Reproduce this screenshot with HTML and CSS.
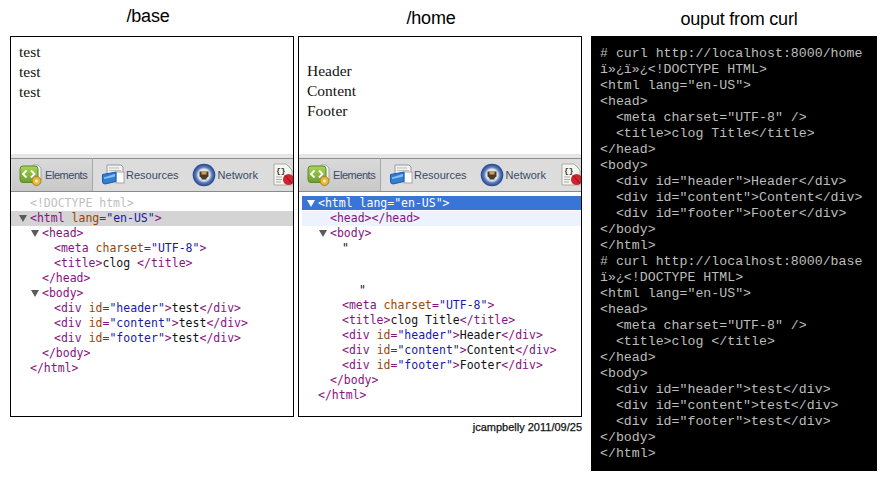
FILE: index.html
```html
<!DOCTYPE html>
<html lang="en-US">
<head>
<meta charset="UTF-8">
<title>clog templates</title>
<link rel="stylesheet" href="styles.css">
</head>
<body>
<main class="sheet">
  <section class="col">
    <h2 class="title title-base">/base</h2>
    <div class="browser">
      <div class="page page-base"><div>test</div><div>test</div><div>test</div></div>
      <div class="devtools">
        <div class="toolbar">
          <div class="tab tab-active">
            <svg class="ico" width="24" height="22" viewBox="0 0 24 22"><defs><linearGradient id="g1" x1="0" y1="0" x2="0" y2="1"><stop offset="0" stop-color="#a9d458"/><stop offset="1" stop-color="#6a9e2c"/></linearGradient></defs><path d="M14 1h5l3 3v12h-8z" fill="#f4f4ee" stroke="#a5a5a5"/><rect x="1" y="2" width="18" height="16.500" rx="3" fill="url(#g1)" stroke="#5c8a2a"/><path d="M7.500 6.500 4 10l3.500 3.500M12 6.500 15.500 10 12 13.500" fill="none" stroke="#fff" stroke-width="1.800"/><circle cx="17.500" cy="17" r="4.500" fill="#e8b83a" stroke="#a97f1c"/><circle cx="17.500" cy="17" r="1.500" fill="#fff3c4"/></svg>
            <span class="tab-active-label">Elements</span>
          </div>
          <div class="tab">
            <svg class="ico" width="24" height="22" viewBox="0 0 24 22"><path d="M6 1h14l2 2v14H6z" fill="#f2f2f2" stroke="#9a9a9a"/><path d="M8 4h10M8 6.500h12" stroke="#bbb"/><rect x="15" y="8" width="8" height="11" fill="#fdfdfd" stroke="#a5a5a5"/><path d="M1.500 10.500 15 8v9.500l-11 2.500Q1.500 20 1.500 17z" fill="#2f7fd8" stroke="#1d5aa5"/><path d="M3 13.500 14 10v2.500l-11 2.500z" fill="#8cc2f5"/></svg>
            <span>Resources</span>
          </div>
          <div class="tab">
            <svg class="ico ico-net" width="24" height="24" viewBox="0 0 24 24"><defs><radialGradient id="n1"><stop offset="0.500" stop-color="#dfe6f2"/><stop offset="0.700" stop-color="#5f7fb8"/><stop offset="1" stop-color="#23408c"/></radialGradient></defs><circle cx="12" cy="12" r="11.300" fill="url(#n1)"/><path d="M7.500 8.500h9v5l-2 1.500v1.500h-5V15l-2-1.500z" fill="#4a3a28"/><path d="M9.500 8.500h5v3h-5z" fill="#c9a35a"/></svg>
            <span>Network</span>
          </div>
          <div class="tab">
            <svg class="ico" width="22" height="24" viewBox="0 0 22 24"><path d="M1 1h12l6 6v15H1z" fill="#f6f6f0" stroke="#aaa"/><text class="braces" x="3" y="10">{}</text><path d="M3 14h6M3 16.500h6M3 19h5" stroke="#aaa"/><circle cx="15.500" cy="16.500" r="5.500" fill="#d2232a"/><path d="M12 12.500l7 8" stroke="#8c1014"/></svg>
          </div>
        </div>
        <div class="tree">
          <div class="row l0 doctype">&lt;!DOCTYPE html&gt;</div>
          <div class="row l0 picked"><i class="arrow"></i><span class="t">&lt;html</span> <span class="a">lang</span><span class="t">=</span><span class="v">"en-US"</span><span class="t">&gt;</span></div>
          <div class="row l1"><i class="arrow"></i><span class="t">&lt;head&gt;</span></div>
          <div class="row l2"><span class="t">&lt;meta</span> <span class="a">charset</span><span class="t">=</span><span class="v">"UTF-8"</span><span class="t">&gt;</span></div>
          <div class="row l2"><span class="t">&lt;title&gt;</span>clog <span class="t">&lt;/title&gt;</span></div>
          <div class="row l1"><span class="t">&lt;/head&gt;</span></div>
          <div class="row l1"><i class="arrow"></i><span class="t">&lt;body&gt;</span></div>
          <div class="row l2"><span class="t">&lt;div</span> <span class="a">id</span><span class="t">=</span><span class="v">"header"</span><span class="t">&gt;</span>test<span class="t">&lt;/div&gt;</span></div>
          <div class="row l2"><span class="t">&lt;div</span> <span class="a">id</span><span class="t">=</span><span class="v">"content"</span><span class="t">&gt;</span>test<span class="t">&lt;/div&gt;</span></div>
          <div class="row l2"><span class="t">&lt;div</span> <span class="a">id</span><span class="t">=</span><span class="v">"footer"</span><span class="t">&gt;</span>test<span class="t">&lt;/div&gt;</span></div>
          <div class="row l1"><span class="t">&lt;/body&gt;</span></div>
          <div class="row l0"><span class="t">&lt;/html&gt;</span></div>
        </div>
      </div>
    </div>
  </section>

  <section class="col">
    <h2 class="title title-home">/home</h2>
    <div class="browser">
      <div class="page page-home"><div>Header</div><div>Content</div><div>Footer</div></div>
      <div class="devtools">
        <div class="toolbar">
          <div class="tab tab-active">
            <svg class="ico" width="24" height="22" viewBox="0 0 24 22"><path d="M14 1h5l3 3v12h-8z" fill="#f4f4ee" stroke="#a5a5a5"/><rect x="1" y="2" width="18" height="16.500" rx="3" fill="url(#g1)" stroke="#5c8a2a"/><path d="M7.500 6.500 4 10l3.500 3.500M12 6.500 15.500 10 12 13.500" fill="none" stroke="#fff" stroke-width="1.800"/><circle cx="17.500" cy="17" r="4.500" fill="#e8b83a" stroke="#a97f1c"/><circle cx="17.500" cy="17" r="1.500" fill="#fff3c4"/></svg>
            <span class="tab-active-label">Elements</span>
          </div>
          <div class="tab">
            <svg class="ico" width="24" height="22" viewBox="0 0 24 22"><path d="M6 1h14l2 2v14H6z" fill="#f2f2f2" stroke="#9a9a9a"/><path d="M8 4h10M8 6.500h12" stroke="#bbb"/><rect x="15" y="8" width="8" height="11" fill="#fdfdfd" stroke="#a5a5a5"/><path d="M1.500 10.500 15 8v9.500l-11 2.500Q1.500 20 1.500 17z" fill="#2f7fd8" stroke="#1d5aa5"/><path d="M3 13.500 14 10v2.500l-11 2.500z" fill="#8cc2f5"/></svg>
            <span>Resources</span>
          </div>
          <div class="tab">
            <svg class="ico ico-net" width="24" height="24" viewBox="0 0 24 24"><circle cx="12" cy="12" r="11.300" fill="url(#n1)"/><path d="M7.500 8.500h9v5l-2 1.500v1.500h-5V15l-2-1.500z" fill="#4a3a28"/><path d="M9.500 8.500h5v3h-5z" fill="#c9a35a"/></svg>
            <span>Network</span>
          </div>
          <div class="tab">
            <svg class="ico" width="22" height="24" viewBox="0 0 22 24"><path d="M1 1h12l6 6v15H1z" fill="#f6f6f0" stroke="#aaa"/><text class="braces" x="3" y="10">{}</text><path d="M3 14h6M3 16.500h6M3 19h5" stroke="#aaa"/><circle cx="15.500" cy="16.500" r="5.500" fill="#d2232a"/><path d="M12 12.500l7 8" stroke="#8c1014"/></svg>
          </div>
        </div>
        <div class="tree">
          <div class="row l0 selected"><i class="arrow arrow-white"></i>&lt;html lang="en-US"&gt;</div>
          <div class="row l1 tinted"><span class="t">&lt;head&gt;&lt;/head&gt;</span></div>
          <div class="row l1"><i class="arrow"></i><span class="t">&lt;body&gt;</span></div>
          <div class="row l2">"</div>
          <div class="row l2 gap-row"></div>
          <div class="row l2 quote-end">"</div>
          <div class="row l2"><span class="t">&lt;meta</span> <span class="a">charset</span><span class="t">=</span><span class="v">"UTF-8"</span><span class="t">&gt;</span></div>
          <div class="row l2"><span class="t">&lt;title&gt;</span>clog Title<span class="t">&lt;/title&gt;</span></div>
          <div class="row l2"><span class="t">&lt;div</span> <span class="a">id</span><span class="t">=</span><span class="v">"header"</span><span class="t">&gt;</span>Header<span class="t">&lt;/div&gt;</span></div>
          <div class="row l2"><span class="t">&lt;div</span> <span class="a">id</span><span class="t">=</span><span class="v">"content"</span><span class="t">&gt;</span>Content<span class="t">&lt;/div&gt;</span></div>
          <div class="row l2"><span class="t">&lt;div</span> <span class="a">id</span><span class="t">=</span><span class="v">"footer"</span><span class="t">&gt;</span>Footer<span class="t">&lt;/div&gt;</span></div>
          <div class="row l1"><span class="t">&lt;/body&gt;</span></div>
          <div class="row l0"><span class="t">&lt;/html&gt;</span></div>
        </div>
      </div>
    </div>
    <p class="credit">jcampbelly 2011/09/25</p>
  </section>

  <section class="col col-curl">
    <h2 class="title title-curl">ouput from curl</h2>
    <pre class="terminal"># curl http://localhost:8000/home
ï»¿ï»¿&lt;!DOCTYPE HTML&gt;
&lt;html lang="en-US"&gt;
&lt;head&gt;
  &lt;meta charset="UTF-8" /&gt;
  &lt;title&gt;clog Title&lt;/title&gt;
&lt;/head&gt;
&lt;body&gt;
  &lt;div id="header"&gt;Header&lt;/div&gt;
  &lt;div id="content"&gt;Content&lt;/div&gt;
  &lt;div id="footer"&gt;Footer&lt;/div&gt;
&lt;/body&gt;
&lt;/html&gt;
# curl http://localhost:8000/base
ï»¿&lt;!DOCTYPE HTML&gt;
&lt;html lang="en-US"&gt;
&lt;head&gt;
  &lt;meta charset="UTF-8" /&gt;
  &lt;title&gt;clog &lt;/title&gt;
&lt;/head&gt;
&lt;body&gt;
  &lt;div id="header"&gt;test&lt;/div&gt;
  &lt;div id="content"&gt;test&lt;/div&gt;
  &lt;div id="footer"&gt;test&lt;/div&gt;
&lt;/body&gt;
&lt;/html&gt;</pre>
  </section>
</main>
</body>
</html>
```
FILE: styles.css
```css
* { box-sizing: border-box; }
html, body { margin: 0; background: #fff; }
body { overflow: hidden; }

.sheet {
  display: flex;
  gap: 4px;
  padding-left: 10px;
  width: 890px;
  height: 480px;
  font-family: "Liberation Sans", Arial, sans-serif;
}
.col { width: 284px; flex: none; }
.col-curl { width: 286px; margin-left: 5px; }

.title {
  margin: 0;
  height: 36px;
  font-size: 18px;
  font-weight: 400;
  line-height: 18px;
  color: #000;
  text-align: center;
  letter-spacing: -0.2px;
}
.title-base { padding: 7px 8px 0 0; }
.title-home { padding: 9px 18px 0 0; }
.title-curl { padding: 10px 0 0 10px; }

.browser {
  height: 381px;
  border: 1px solid #000;
  overflow: hidden;
  display: flex;
  flex-direction: column;
  background: #fff;
}
.page {
  height: 117px;
  flex: none;
  font-family: "Liberation Serif", "Times New Roman", serif;
  font-size: 15.5px;
  line-height: 20px;
  color: #111;
}
.page-base { padding: 5px 0 0 8px; }
.page-home { padding: 24px 0 0 8px; }

.devtools { flex: 1; display: flex; flex-direction: column; min-height: 0; }

.toolbar {
  height: 38px;
  flex: none;
  display: flex;
  align-items: stretch;
  padding-left: 1px;
  overflow: hidden;
  background: #dcdcdc;
  border-top: 4px solid #e6e6e6;
  border-bottom: 1px solid #8a8a8a;
  box-shadow: inset 0 1px 0 #8f8f8f;
  font-size: 11px;
  color: #384a63;
}
.tab {
  display: flex;
  align-items: center;
  gap: 2px;
  padding: 1px 0 0 8px;
  flex: none;
}
.tab span { white-space: nowrap; }
.tab-active {
  width: 81px;
  padding-left: 7px;
  background: linear-gradient(#dadada, #c8c8c8);
  border-right: 1px solid #a8a8a8;
  box-shadow: inset 0 1px 0 #8f8f8f;
}
.tab-active-label { letter-spacing: -0.45px; }
.tab:nth-child(2) { gap: 1px; }
.tab:nth-child(3) { padding-left: 13px; }
.tab:nth-child(4) { padding-left: 15px; }
.ico { flex: none; display: block; }
.braces { font: 700 8px "Liberation Mono", monospace; fill: #333; }

.tree {
  flex: 1;
  padding-top: 4px;
  font-family: "DejaVu Sans Mono", monospace;
  font-size: 11.5px;
  line-height: 15px;
  color: #111;
}
.row { height: 15px; white-space: pre; }
.l0 { padding-left: 19px; }
.l1 { padding-left: 31px; }
.l2 { padding-left: 43px; }
.t { color: #881280; }
.a { color: #994500; }
.v { color: #1a1aa6; }
.doctype { color: #c0c0c0; }
.picked { background: #d4d4d4; }
.selected { background: #3875d7; color: #fff; margin-left: 3px; padding-left: 16px; height: 14px; line-height: 14px; margin-bottom: 1px; }
.tinted { background: #edf3fe; margin-left: 3px; padding-left: 28px; }
.gap-row { height: 27px; }
.quote-end { padding-left: 60px; }

.arrow {
  display: inline-block;
  width: 0;
  height: 0;
  margin-left: -11px;
  margin-right: 3px;
  border-left: 4px solid transparent;
  border-right: 4px solid transparent;
  border-top: 7px solid #5a5a5a;
}
.arrow-white { border-top-color: #fff; }

.credit {
  margin: 4px 0 0;
  font-size: 11px;
  line-height: 13px;
  text-align: right;
  color: #111;
  -webkit-text-stroke: 0.25px #111;
}

.terminal {
  margin: 0;
  height: 435px;
  padding: 10px 0 0 9px;
  background: #000;
  color: #bdbdbd;
  font-family: "Liberation Mono", "Courier New", monospace;
  font-size: 13.25px;
  line-height: 16px;
}
```
